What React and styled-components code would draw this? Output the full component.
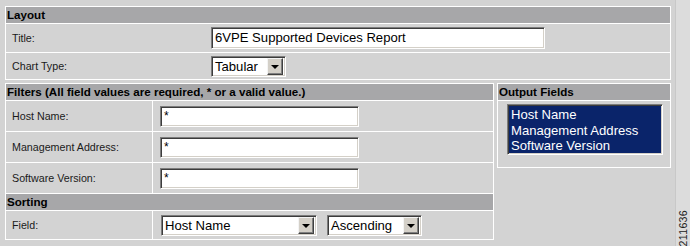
import React from 'react';
import styled, { createGlobalStyle } from 'styled-components';

const GlobalStyle = createGlobalStyle`
  html, body {
    margin: 0;
    padding: 0;
    background: #d3d3d3;
  }
  body {
    font-family: "Liberation Sans", Arial, sans-serif;
    color: #111;
  }
`;

const Page = styled.div`
  display: flex;
  width: 690px;
  height: 246px;
  overflow: hidden;
`;

const Main = styled.div`
  width: 670px;
  padding: 6px 0 0 5px;
  background: #d3d3d3;
  display: flex;
  flex-direction: column;
  gap: 3px;
`;

const Strip = styled.div`
  flex: 1;
  background: #dcdcdc;
  border-left: 1px solid #c8c8c8;
  position: relative;
`;

const FigureNo = styled.span`
  position: absolute;
  left: 1px;
  bottom: 0;
  font-size: 10.6px;
  line-height: 12px;
  color: #222;
  writing-mode: vertical-rl;
  transform: rotate(180deg);
  letter-spacing: 0.3px;
`;

const Table = styled.div`
  border: 1px solid #fff;
  width: ${(p) => p.$width}px;
  box-sizing: border-box;
  align-self: flex-start;
`;

const Header = styled.div`
  box-sizing: border-box;
  height: 17px;
  line-height: 16px;
  background: #a7a7a9;
  font-weight: bold;
  font-size: 11.6px;
  padding-left: 1px;
  border-bottom: 1px solid #fff;
  color: #000;
`;

const Row = styled.div`
  box-sizing: border-box;
  display: grid;
  grid-template-columns: ${(p) => p.$label}px 1fr;
  height: ${(p) => p.$h}px;
  border-bottom: 1px solid #fff;
  &:last-child {
    border-bottom: none;
  }
`;

const Label = styled.div`
  display: flex;
  align-items: center;
  padding-left: 6px;
  font-size: 10.7px;
  color: #1a1a1a;
  border-right: ${(p) => (p.$divider ? '1px solid #fff' : 'none')};
`;

const Value = styled.div`
  display: flex;
  align-items: center;
  gap: 10px;
  padding-left: ${(p) => p.$pad}px;
`;

const inset = `
  box-sizing: border-box;
  border: 1px solid;
  border-color: #7c7c7c #fff #fff #7c7c7c;
  box-shadow: inset 1px 1px 0 #3c3c3c, inset -1px -1px 0 #d4d0c8;
`;

const TextBox = styled.div`
  ${inset}
  width: ${(p) => p.$w}px;
  height: ${(p) => p.$h}px;
  background: #fff;
  font-size: ${(p) => (p.$star ? 12 : 13.1)}px;
  line-height: ${(p) => (p.$star ? 14 : 18)}px;
  padding: ${(p) => (p.$star ? '2px 3px' : '1px 3px')};
  color: #000;
  white-space: nowrap;
`;

const Select = styled.div`
  ${inset}
  width: ${(p) => p.$w}px;
  height: 21px;
  background: #fff;
  display: flex;
  align-items: center;
  justify-content: space-between;
  padding: 2px;
  font-size: 13.1px;
  color: #000;
`;

const SelectText = styled.span`
  padding-left: 1px;
`;

const DropButton = styled.span`
  width: 16px;
  height: 17px;
  box-sizing: border-box;
  background: #d4d0c8;
  border: 1px solid;
  border-color: #f4f4f4 #404040 #404040 #f4f4f4;
  box-shadow: inset -1px -1px 0 #808080;
  display: flex;
  align-items: center;
  justify-content: center;
  &::after {
    content: '';
    border-left: 4px solid transparent;
    border-right: 4px solid transparent;
    border-top: 4px solid #000;
    margin-top: 1px;
  }
`;

const Lower = styled.div`
  display: flex;
  gap: 3px;
`;

const OutputBody = styled.div`
  padding: 3px 7px 5px 9px;
  height: 58px;
`;

const ListBox = styled.div`
  ${inset}
  height: 51px;
  background: #0a246a;
  color: #fff;
  font-size: 13.1px;
  line-height: 15.5px;
  padding: 2px 3px;
`;

const Dropdown = ({ w, children }) => (
  <Select $w={w}>
    <SelectText>{children}</SelectText>
    <DropButton />
  </Select>
);

const filters = ['Host Name:', 'Management Address:', 'Software Version:'];

export default function App() {
  return (
    <>
      <GlobalStyle />
      <Page>
        <Main>
          <Table $width={666}>
            <Header>Layout</Header>
            <Row $label={199} $h={29}>
              <Label>Title:</Label>
              <Value $pad={6}>
                <TextBox $w={334} $h={22}>6VPE Supported Devices Report</TextBox>
              </Value>
            </Row>
            <Row $label={199} $h={26}>
              <Label>Chart Type:</Label>
              <Value $pad={6}>
                <Dropdown w={75}>Tabular</Dropdown>
              </Value>
            </Row>
          </Table>
          <Lower>
            <Table $width={489}>
              <Header>Filters (All field values are required, * or a valid value.)</Header>
              {filters.map((f) => (
                <Row key={f} $label={147} $h={31}>
                  <Label $divider>{f}</Label>
                  <Value $pad={7}>
                    <TextBox $w={199} $h={21} $star>*</TextBox>
                  </Value>
                </Row>
              ))}
              <Header>Sorting</Header>
              <Row $label={147} $h={28}>
                <Label $divider>Field:</Label>
                <Value $pad={8}>
                  <Dropdown w={156}>Host Name</Dropdown>
                  <Dropdown w={95}>Ascending</Dropdown>
                </Value>
              </Row>
            </Table>
            <Table $width={174}>
              <Header>Output Fields</Header>
              <OutputBody>
                <ListBox>
                  <div>Host Name</div>
                  <div>Management Address</div>
                  <div>Software Version</div>
                </ListBox>
              </OutputBody>
            </Table>
          </Lower>
        </Main>
        <Strip>
          <FigureNo>211636</FigureNo>
        </Strip>
      </Page>
    </>
  );
}
